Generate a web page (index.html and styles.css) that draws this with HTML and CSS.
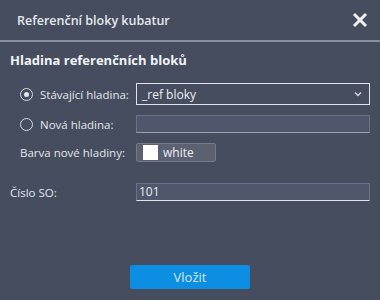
FILE: index.html
```html
<!DOCTYPE html>
<html lang="cs">
<head>
    <meta charset="UTF-8">
    <title>Referenční bloky kubatur</title>
    <link rel="stylesheet" href="styles.css">
</head>
<body>
    <div class="dialog">
        <div class="titlebar">
            <div class="title">Referenční bloky kubatur</div>
            <svg class="close" width="16" height="16" viewBox="0 0 16 16">
                <path d="M2 2 L14 14 M14 2 L2 14" stroke="#f2f2f2" stroke-width="3" stroke-linecap="butt"/>
            </svg>
        </div>
        <div class="content">
            <div class="heading">Hladina referenčních bloků</div>

            <div class="row row-select">
                <label class="label indent"><span class="radio checked"></span>Stávající hladina:</label>
                <div class="select">
                    <span>_ref bloky</span>
                    <svg width="8" height="6" viewBox="0 0 8 6"><path d="M1 1.5 L4 4.5 L7 1.5" stroke="#d8dbe2" stroke-width="1.3" fill="none"/></svg>
                </div>
            </div>

            <div class="row row-new">
                <label class="label indent"><span class="radio"></span>Nová hladina:</label>
                <div class="input input-disabled"></div>
            </div>

            <div class="row row-color">
                <label class="label indent">Barva nové hladiny:</label>
                <div class="color-btn"><span class="swatch"></span>white</div>
            </div>

            <div class="row row-number">
                <label class="label">Číslo SO:</label>
                <div class="input input-text">101</div>
            </div>

            <div class="footer">
                <button class="primary">Vložit</button>
            </div>
        </div>
    </div>
</body>
</html>
```

FILE: styles.css
```css
/* dialog in dark theme */
body {
    margin: 0;
    background-color: #464d5f;
    font-family: "Open Sans", "Noto Sans", sans-serif;
    font-size: 11.5px;
    color: #e4e6ea;
}

.dialog {
    width: 380px;
    height: 300px;
}

.titlebar {
    height: 40px;
    display: flex;
    align-items: center;
    justify-content: space-between;
    padding: 0 12px 0 17px;
    border-bottom: 2px solid #8a909c;
}

.title {
    font-size: 12.5px;
    font-weight: 600;
    color: #e6e8ec;
}

.close {
    display: block;
}

.content {
    padding: 9px 10px 0 10px;
}

.heading {
    font-size: 13px;
    font-weight: 700;
    color: #f2f3f5;
    line-height: 18px;
    margin-bottom: 14px;
}

.row {
    display: flex;
    align-items: center;
}

.label {
    width: 126px;
    flex-shrink: 0;
    display: flex;
    align-items: center;
    color: #e4e6ea;
}

.indent {
    padding-left: 10px;
    width: 116px;
}

.radio {
    width: 11px;
    height: 11px;
    border: 1px solid #d6d8dd;
    border-radius: 50%;
    margin-right: 7px;
    position: relative;
}

.radio.checked::after {
    content: "";
    position: absolute;
    left: 3px;
    top: 3px;
    width: 5px;
    height: 5px;
    border-radius: 50%;
    background-color: #e4e6ea;
}

.row-select {
    height: 22px;
    margin-bottom: 10px;
}

.select {
    flex: 1;
    height: 20px;
    border: 1px solid #e0e2e6;
    display: flex;
    align-items: center;
    justify-content: space-between;
    padding: 0 7px 0 5px;
    font-size: 12px;
    color: #eceef1;
}

.row-new {
    height: 18px;
    margin-bottom: 10px;
}

.input {
    flex: 1;
    box-sizing: border-box;
    background-color: #4e576b;
    border: 1px solid #6a7283;
}

.input-disabled {
    height: 18px;
    border-bottom-color: #9aa0ab;
}

.row-color {
    height: 19px;
    margin-bottom: 21px;
}

.color-btn {
    width: 80px;
    height: 19px;
    box-sizing: border-box;
    background-color: #5b6170;
    border: 1px solid #737a88;
    border-radius: 2px;
    display: flex;
    align-items: center;
    padding-left: 6px;
    font-size: 12px;
    color: #eceef1;
}

.swatch {
    width: 15px;
    height: 15px;
    background-color: #ffffff;
    margin-right: 5px;
}

.row-number {
    height: 18px;
}

.input-text {
    height: 18px;
    border-bottom-color: #e0e2e6;
    padding-left: 2px;
    font-size: 12px;
    line-height: 16px;
    color: #eceef1;
}

.footer {
    display: flex;
    justify-content: center;
    margin-top: 64px;
}

.primary {
    width: 120px;
    height: 24px;
    border: none;
    border-radius: 2px;
    background-color: #0c8fe2;
    color: #d6e6f4;
    font-family: "Open Sans", "Noto Sans", sans-serif;
    font-size: 13px;
    padding: 0;
}
```
